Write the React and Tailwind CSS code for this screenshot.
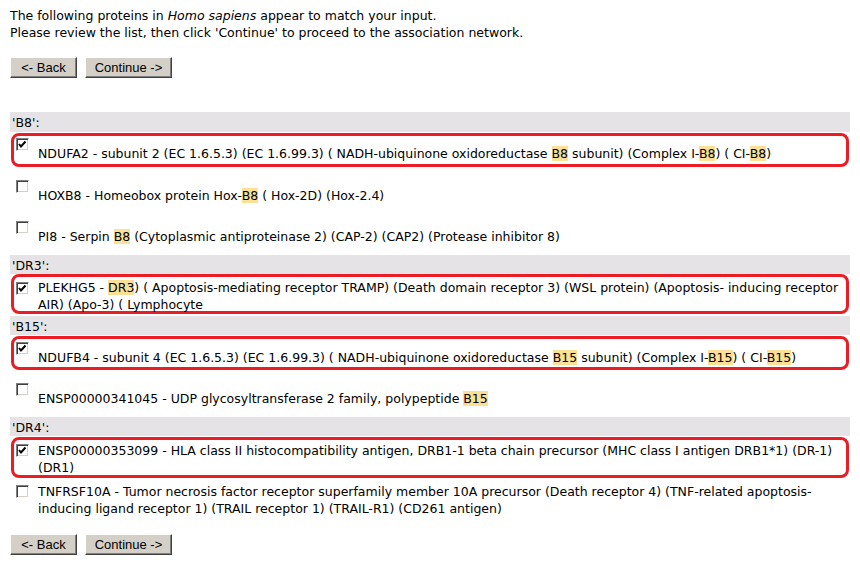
import React from "react";

// text with [..] parts gets the yellow highlight
const Marked = ({ text }) => {
    const parts = text.split(/(\[[^\]]+\])/);
    return (
        <>
            {parts.map((p, i) =>
                p.startsWith("[") ? (
                    <span key={i} className="bg-[#fbe096]">{p.slice(1, -1)}</span>
                ) : (
                    <React.Fragment key={i}>{p}</React.Fragment>
                )
            )}
        </>
    );
};

const CheckBox = ({ checked }) => (
    <div className="w-[13px] h-[13px] bg-white border border-t-[#808080] border-l-[#808080] border-b-white border-r-white shadow-[inset_1px_1px_0_#404040,inset_-1px_-1px_0_#d4d0c8] flex items-center justify-center">
        {checked ? (
            <svg width="11" height="11" viewBox="0 0 11 11">
                <polyline points="2,5 4,7.5 8.5,2.5" fill="none" stroke="#000" strokeWidth="2" />
            </svg>
        ) : null}
    </div>
);

const Button = ({ label, width }) => (
    <button
        className={`${width} h-[21px] bg-[#d4d0c8] border border-t-white border-l-white border-b-[#404040] border-r-[#404040] shadow-[inset_-1px_-1px_0_#808080] text-[13px] leading-[17px] text-black font-['Liberation_Sans',Arial,sans-serif]`}
    >
        {label}
    </button>
);

const Buttons = () => (
    <div className="flex gap-[8px]">
        <Button label="<- Back" width="w-[67px]" />
        <Button label="Continue ->" width="w-[87px]" />
    </div>
);

const Header = ({ label, h }) => (
    <div className={`${h} bg-[#e6e3e6] pl-[2px] pt-[2px] leading-[17px]`}>'{label}':</div>
);

const Lines = ({ lines }) => (
    <div>
        {lines.map((l, i) => (
            <div key={i} className="whitespace-nowrap leading-[17px]">
                <Marked text={l} />
            </div>
        ))}
    </div>
);

// plain row, no red frame
const Row = ({ lines, h, cb, tx }) => (
    <div className={`${h} flex items-start`}>
        <div className={`w-[28px] pl-[6px] shrink-0 ${cb}`}>
            <CheckBox checked={false} />
        </div>
        <div className={tx}>
            <Lines lines={lines} />
        </div>
    </div>
);

// checked row, framed in red
const BoxRow = ({ lines, h, cb, tx, extra }) => (
    <div className={`${h} mx-[1px] border-[3px] border-[#ec1c24] rounded-[8px] flex items-start ${extra}`}>
        <div className={`w-[24px] pl-[2px] shrink-0 ${cb}`}>
            <CheckBox checked={true} />
        </div>
        <div className={tx}>
            <Lines lines={lines} />
        </div>
    </div>
);

const App = () => {
    return (
        <div className="w-[860px] h-[566px] bg-white px-[10px] pt-[7px] text-[12.5px] text-black font-['DejaVu_Sans',Verdana,sans-serif]">
            <div className="leading-[17px]">
                <p>The following proteins in <i>Homo sapiens</i> appear to match your input.</p>
                <p>Please review the list, then click 'Continue' to proceed to the association network.</p>
            </div>

            <div className="mt-[16px]">
                <Buttons />
            </div>

            <div className="mt-[34px]">
                <Header label="B8" h="h-[20px]" />
                <BoxRow
                    h="h-[34px]"
                    extra="mt-[1px]"
                    cb="pt-[2px]"
                    tx="pt-[9px]"
                    lines={["NDUFA2 - subunit 2 (EC 1.6.5.3) (EC 1.6.99.3) ( NADH-ubiquinone oxidoreductase [B8] subunit) (Complex I-[B8]) ( CI-[B8])"]}
                />
                <Row
                    h="h-[41px]"
                    cb="pt-[13px]"
                    tx="pt-[20px]"
                    lines={["HOXB8 - Homeobox protein Hox-[B8] ( Hox-2D) (Hox-2.4)"]}
                />
                <Row
                    h="h-[47px]"
                    cb="pt-[13px]"
                    tx="pt-[20px]"
                    lines={["PI8 - Serpin [B8] (Cytoplasmic antiproteinase 2) (CAP-2) (CAP2) (Protease inhibitor 8)"]}
                />

                <Header label="DR3" h="h-[19px]" />
                <BoxRow
                    h="h-[40px]"
                    extra="mb-[2px]"
                    cb="pt-[5px]"
                    tx="pt-[2px]"
                    lines={[
                        "PLEKHG5 - [DR3]) ( Apoptosis-mediating receptor TRAMP) (Death domain receptor 3) (WSL protein) (Apoptosis- inducing receptor",
                        "AIR) (Apo-3) ( Lymphocyte",
                    ]}
                />

                <Header label="B15" h="h-[19px]" />
                <BoxRow
                    h="h-[34px]"
                    extra="mt-[1px]"
                    cb="pt-[3px]"
                    tx="pt-[10px]"
                    lines={["NDUFB4 - subunit 4 (EC 1.6.5.3) (EC 1.6.99.3) ( NADH-ubiquinone oxidoreductase [B15] subunit) (Complex I-[B15]) ( CI-[B15])"]}
                />
                <Row
                    h="h-[47px]"
                    cb="pt-[13px]"
                    tx="pt-[20px]"
                    lines={["ENSP00000341045 - UDP glycosyltransferase 2 family, polypeptide [B15]"]}
                />

                <Header label="DR4" h="h-[19px]" />
                <BoxRow
                    h="h-[41px]"
                    extra="mt-[1px]"
                    cb="pt-[4px]"
                    tx="pt-[2px]"
                    lines={[
                        "ENSP00000353099 - HLA class II histocompatibility antigen, DRB1-1 beta chain precursor (MHC class I antigen DRB1*1) (DR-1)",
                        "(DR1)",
                    ]}
                />
                <Row
                    h="h-[40px]"
                    cb="pt-[7px]"
                    tx="pt-[5px]"
                    lines={[
                        "TNFRSF10A - Tumor necrosis factor receptor superfamily member 10A precursor (Death receptor 4) (TNF-related apoptosis-",
                        "inducing ligand receptor 1) (TRAIL receptor 1) (TRAIL-R1) (CD261 antigen)",
                    ]}
                />
            </div>

            <div className="mt-[16px]">
                <Buttons />
            </div>
        </div>
    );
};

export default App;
